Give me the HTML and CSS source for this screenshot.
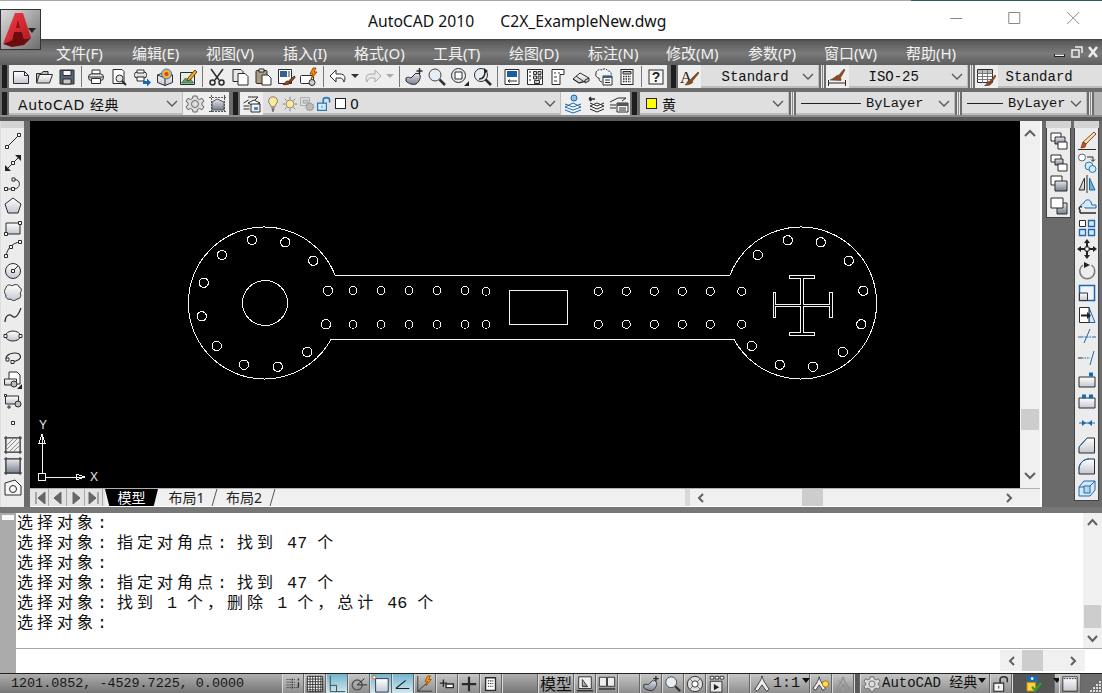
FILE: index.html
```html
<!DOCTYPE html>
<html lang="zh-CN">
<head>
<meta charset="utf-8">
<title>AutoCAD 2010</title>
<link rel="stylesheet" href="styles.css">
</head>
<body>
<svg class="defs" width="0" height="0">
<defs>
<linearGradient id="g" x1="0" y1="0" x2="0" y2="1"><stop offset="0" stop-color="#fff"/><stop offset="1" stop-color="#c2c7d0"/></linearGradient>
<linearGradient id="d" x1="0" y1="0" x2="0" y2="1"><stop offset="0" stop-color="#e8e8ee"/><stop offset="1" stop-color="#77808e"/></linearGradient>
<linearGradient id="red" x1="0" y1="0" x2="1" y2="1"><stop offset="0" stop-color="#f0404a"/><stop offset="1" stop-color="#b5141b"/></linearGradient>

<symbol id="chev" viewBox="0 0 12 8"><path fill="none" stroke="#555" stroke-width="1.300" d="M1 1l5 5 5-5"/></symbol>
<symbol id="new" viewBox="0 0 20 20"><path fill="url(#g)" d="M2.500 4.500h11l4 4v8h-15z"/><path d="M13.500 4.500v4h4"/></symbol>
<symbol id="open" viewBox="0 0 20 20"><path fill="#bbb" d="M2.500 16V6.500h5l1.500-2h5v3"/><path fill="url(#g)" d="M2.500 16l3-8.500h13l-3 8.500z"/></symbol>
<symbol id="save" viewBox="0 0 20 20"><path fill="#56647a" d="M3 3h14v14H3z"/><path fill="#f4f4f4" d="M6 3.500h8v5H6z"/><path fill="#c8c8c8" d="M6 12h8v5H6z"/></symbol>
<symbol id="print" viewBox="0 0 20 20"><path fill="#fff" d="M6 3h8v4H6z"/><rect fill="url(#g)" x="2.500" y="7" width="15" height="6.500" rx="3"/><path fill="#fff" d="M5.500 11.500h9v5h-9z"/><path d="M3 10h14"/></symbol>
<symbol id="preview" viewBox="0 0 20 20"><path fill="#fff" d="M4 2.500h9l2 2v12H4z"/><circle cx="10.500" cy="11.500" r="3.500" fill="#dfe6ee"/><path stroke-width="2" d="M13 14l4 4"/></symbol>
<symbol id="publish" viewBox="0 0 20 20"><rect fill="url(#g)" x="2.500" y="5" width="12" height="6" rx="2.500"/><path fill="#fff" d="M5 3h7v3H5zM5 10h7v4H5z"/><path fill="#1667b5" stroke="none" d="M11 14h4v-2.500l4 4-4 4V17h-4z"/></symbol>
<symbol id="plot3d" viewBox="0 0 20 20"><path fill="url(#g)" d="M2.500 8L10 5l7.500 3v7.500L10 18.500l-7.500-3z"/><path d="M2.500 8l7.500 3 7.500-3M10 11v7.500"/><circle cx="11.500" cy="7" r="5" fill="#f0b040" stroke="#2a80c0"/><circle cx="11.500" cy="7" r="2" fill="#d84030" stroke="none"/></symbol>
<symbol id="pen" viewBox="0 0 20 20"><path fill="#e8eee6" d="M2.500 5.500h14v12h-14z"/><path fill="#5aa070" stroke="#3b7a55" d="M3.500 16l4-5 3 3 2-2 3 4z"/><path fill="#e9b020" stroke="#704010" d="M10 11l7-8 2 2-7 8-3 1z"/></symbol>
<symbol id="cut" viewBox="0 0 20 20"><path stroke-width="1.500" d="M4 2l8 11M16 2l-8 11"/><circle cx="5.500" cy="15.500" r="2.500" stroke-width="1.500"/><circle cx="14.500" cy="15.500" r="2.500" stroke-width="1.500"/></symbol>
<symbol id="copy" viewBox="0 0 20 20"><path fill="#e8e8e8" d="M3 2.500h8l2 2v10H3z"/><path fill="#fff" d="M8 6.500h7l3 3v8.500H8z"/></symbol>
<symbol id="paste" viewBox="0 0 20 20"><rect x="3" y="3.500" width="11" height="13" rx="1" fill="#a99a80"/><path fill="#ddd" d="M6 2h5v3H6z"/><path fill="#fff" d="M9 8h6l3 3v7H9z"/></symbol>
<symbol id="match" viewBox="0 0 20 20"><path fill="#fff" d="M2.500 2.500h13v14h-13z"/><path fill="#36608f" stroke="none" d="M4 4h7v6H4z"/><path fill="#999" stroke="none" d="M12 4h2v6h-2z"/><path fill="#8a4a20" stroke="#5a2e10" d="M18.500 9l-6 5 1.500 2 5-5.500zM12 14c-2 0-3 2-5 3.500 3 .5 6 0 7-1.500z"/></symbol>
<symbol id="block" viewBox="0 0 20 20"><rect x="1.500" y="8.500" width="13" height="8" rx="1" fill="#fff"/><circle cx="13" cy="15.500" r="3" fill="#ccc"/><path fill="#f09010" stroke="#a05000" d="M14 1l-3 6h3l-2 5 6-7h-3l2-4z"/></symbol>
<symbol id="undo" viewBox="0 0 20 20"><path fill="#fff" d="M8 3L2 9l6 6v-4h4c2 0 3 1 4 4 2-4 1-8-4-8H8z"/></symbol>
<symbol id="redo" viewBox="0 0 20 20"><path fill="#e8e8e8" stroke="#aaa" d="M12 3l6 6-6 6v-4H8c-2 0-3 1-4 4-2-4-1-8 4-8h4z"/></symbol>
<symbol id="pan" viewBox="0 0 20 20"><path fill="url(#d)" d="M2 11c2-1 3-1 5 0l5-5 1 1 1-1 2 2c1 3-1 7-4 9-3 1-7 0-10-3z"/><path stroke-width="1.500" d="M15.500 1v6M12.500 4h6"/></symbol>
<symbol id="zoom" viewBox="0 0 20 20"><circle cx="8" cy="8" r="6" fill="#e6eef4" stroke="#444"/><path stroke-width="2.500" stroke="#333" d="M12.500 12.500l5.500 5.500"/></symbol>
<symbol id="zoomw" viewBox="0 0 20 20"><circle cx="8.500" cy="8.500" r="7" fill="#e6eef4"/><path fill="#fff" d="M5 5h7v7H5z"/><path fill="#222" stroke="none" d="M19 14v5h-5z"/></symbol>
<symbol id="zoomp" viewBox="0 0 20 20"><circle cx="8" cy="8" r="6.500" fill="#e6eef4"/><path stroke-width="2.500" d="M12.500 12.500l5.500 5.500"/><path fill="#222" stroke="none" d="M11 1l4 3-4 3z"/><path stroke-width="1.500" d="M6 12c4 0 6-3 6-8"/></symbol>
<symbol id="props" viewBox="0 0 20 20"><path fill="#fff" d="M3 2.500h14v15H3z"/><path fill="#1c5ca3" stroke="none" d="M5 4h10v6H5z"/><path d="M6 14h9M6 14l2-1.500M6 14l2 1.500"/></symbol>
<symbol id="dc" viewBox="0 0 20 20"><path fill="#fff" d="M2.500 2.500h15v15h-15z"/><path fill="#888" stroke="none" d="M4 4h2v2H4zM4 8h2v2H4zM4 12h2v2H4z"/><path fill="#cfcfcf" stroke="#333" d="M8.500 4.500h3v3h-3zM13 4.500h3v3h-3zM8.500 9h3v3h-3zM13 9h3v3h-3zM9.500 13.500h5v3h-5z"/></symbol>
<symbol id="tp" viewBox="0 0 20 20"><path fill="#fff" d="M4 2.500h12v5h-4v10H4z"/><path fill="#999" stroke="none" d="M6 5h2v2H6zM10 5h2v2h-2zM6 9h3v2H6zM6 13h3v2H6z"/></symbol>
<symbol id="sheet" viewBox="0 0 20 20"><path fill="url(#g)" d="M2 12l7-6 9 5-3 3-7 2z"/><path d="M5 9l7 5M2 12l6 4 7-2"/><path fill="#ccc" d="M14 13l4-2v3l-4 2z"/></symbol>
<symbol id="markup" viewBox="0 0 20 20"><path fill="#f4f4f4" stroke-dasharray="2 1" d="M2 6c0-3 4-4 6-3 2-2 5-1 6 1 2 0 4 2 3 4"/><path d="M2 6c-1 3 1 5 3 5 0 2 1 4 3 4"/><path fill="#fff" d="M9 9h9v9H9z"/><path fill="#36608f" stroke="none" d="M9 9h9v2H9z"/><path d="M11 13h5M11 15.500h5"/></symbol>
<symbol id="calc" viewBox="0 0 20 20"><rect x="4" y="2.500" width="12" height="15" fill="#fff"/><path fill="#bbb" d="M6 4.500h8v2.500H6z"/><path stroke-width="1.500" stroke-dasharray="1.500 1" d="M6 9.500h8M6 12h8M6 14.500h8"/></symbol>
<symbol id="help" viewBox="0 0 20 20"><rect x="3" y="3" width="14" height="14" fill="#f8f8f8"/><text x="10" y="15" class="gt">?</text></symbol>
<symbol id="astyle" viewBox="0 0 20 20"><text x="1" y="16" class="ga">A</text><path fill="#8a4a20" stroke="#5a2e10" stroke-width=".5" d="M19 5l-7 7 1.500 2 6.500-8zM11 12c-2 1-2 3-5 6 3 0 7-1 8-3z"/></symbol>
<symbol id="dimstyle" viewBox="0 0 20 20"><path fill="#8a4a20" stroke="#5a2e10" stroke-width=".5" d="M17 2l-5 6 2 2 4-7zM11 8c-2 1-5 4-8 5l11 .500c0-2 0-4-3-5.500z"/><path d="M1.500 13v6M18.500 13v6M1.500 16h17"/></symbol>
<symbol id="tablestyle" viewBox="0 0 20 20"><path fill="#fff" d="M1.500 2.500h15v13h-15z"/><path fill="#bbb" stroke="none" d="M2 3h14v3H2z"/><path stroke="#777" d="M1.500 6.500h15M1.500 9.500h15M1.500 12.500h15M6.500 3v13M11.500 3v13"/><path fill="#8a4a20" stroke="#5a2e10" stroke-width=".5" d="M19 8l-5 6 1.500 2 4.500-7zM13.500 14c-2 0-2 3-5 4.500 3 .5 6 0 7-2z"/></symbol>
<symbol id="gear" viewBox="0 0 20 20"><path fill="#ddd" stroke="#666" d="M8 2h4l.5 2.500 2.200 1 2.300-1.300 2 3-2 1.600v2.400l2 1.600-2 3-2.300-1.300-2.200 1L12 18H8l-.5-2.500-2.200-1L3 15.800l-2-3 2-1.600V8.800L1 7.200l2-3 2.300 1.300 2.200-1z"/><circle cx="10" cy="10" r="3.500" stroke="#666"/></symbol>
<symbol id="work" viewBox="0 0 20 20"><path stroke="#555" stroke-dasharray="2 1" d="M1 3.500h18M1 17.500h18M3.500 1v18M16.500 1v18"/><path fill="url(#d)" stroke="#555" d="M4 16V8l5-3 7 3v8z"/></symbol>
<symbol id="layer" viewBox="0 0 20 20"><path fill="#fff" d="M6 9l6-3 6 3-6 3z"/><path d="M1.500 9l5-3M1.500 12h6M1.500 15h6M6 3h10l-3 3"/><path fill="#f0f0f0" d="M9 10h9v8H9z"/><path fill="#4b87bd" stroke="none" d="M12 13h4v3h-4z"/></symbol>
<symbol id="bulb" viewBox="0 0 20 20"><path fill="#ffe89a" stroke="#666" d="M10 1c-3.500 0-5.500 2.500-5.500 5.500 0 3 3 4 3 7h5c0-3 3-4 3-7C15.500 3.500 13.500 1 10 1z"/><path stroke="#555" stroke-width="1.500" d="M8 15h4M8.500 17h3M9 19h2"/></symbol>
<symbol id="sun" viewBox="0 0 20 20"><circle cx="10" cy="10" r="5" fill="#ffe89a" stroke="#777"/><path stroke="#666" d="M10 1v3M10 16v3M1 10h3M16 10h3M3.500 3.500l2 2M14.500 14.500l2 2M16.500 3.500l-2 2M5.500 14.500l-2 2"/></symbol>
<symbol id="freeze" viewBox="0 0 20 20"><path fill="#e4e4e4" stroke="#999" d="M2 2h11v10H2z"/><path fill="#ccc" stroke="#999" d="M5 5h6v4H5z"/><circle cx="13.500" cy="13.500" r="4.500" fill="#bbb" stroke="#999" stroke-dasharray="2 1" stroke-width="2"/></symbol>
<symbol id="lockb" viewBox="0 0 20 20"><path fill="#d7ecf8" stroke="#2b78b5" stroke-width="1.500" d="M2 9h11v9H2z"/><path stroke="#2b78b5" stroke-width="2" d="M9 9V5c0-4 8-4 8 0v3"/><path stroke="#2b78b5" d="M7.500 12v3"/></symbol>
<symbol id="layprev" viewBox="0 0 20 20"><path fill="#fff" stroke="#1c68ae" d="M2 13l8-4 8 4-8 3z"/><path stroke="#1c68ae" d="M2 16l8 3 8-3M2 10l8 3 8-3"/><circle cx="11" cy="4" r="3" fill="#8fc0e6" stroke="#1c68ae"/></symbol>
<symbol id="laymatch" viewBox="0 0 20 20"><path fill="#fff" d="M4 12l7-3 7 3-7 3z"/><path d="M4 15l7 3 7-3M4 9l7 3 7-3"/><path stroke-width="1.500" d="M9 5H3M3 5l2-2M3 5l2 2M5 5v2"/></symbol>
<symbol id="laysave" viewBox="0 0 20 20"><path d="M1 8l8-4h8l-4 3M1 11h6M1 14h6"/><path fill="#f4f4f4" d="M8 9h11v9H8z"/><path fill="#555" stroke="none" d="M8 9h11v3H8z"/><path d="M10 14h7M10 16h7"/></symbol>

<symbol id="t-line" viewBox="0 0 20 20"><path d="M4 16L16 4"/><path fill="#fff" d="M2.500 14.500h3v3h-3zM14.500 2.500h3v3h-3z"/></symbol>
<symbol id="t-xline" viewBox="0 0 20 20"><path d="M3 17L17 3"/><path fill="#fff" d="M8.500 8.500h3v3h-3z"/><path fill="#222" stroke="none" d="M18 2v6l-6-6zM2 18v-6l6 6z"/></symbol>
<symbol id="t-pline" viewBox="0 0 20 20"><path d="M3 15h7c6 0 7-4 6-7-1-2-3-2.500-5-2.500"/><path fill="#fff" d="M1.500 13.500h3v3h-3zM8.500 13.500h3v3h-3zM9 4h3v3H9z"/></symbol>
<symbol id="t-poly" viewBox="0 0 20 20"><path fill="url(#g)" d="M10 2l8 6-3 9H5L2 8z"/></symbol>
<symbol id="t-rect" viewBox="0 0 20 20"><path fill="url(#g)" d="M3 5h14v11H3z"/><path fill="#fff" d="M1.500 14.500h3v3h-3zM15.500 3.500h3v3h-3z"/></symbol>
<symbol id="t-arc" viewBox="0 0 20 20"><path d="M3 17C4 10 9 4 17 3"/><path fill="#fff" d="M1.500 15.500h3v3h-3zM15.500 1.500h3v3h-3zM6.500 6.500h3v3h-3z"/></symbol>
<symbol id="t-circle" viewBox="0 0 20 20"><circle cx="10" cy="10" r="7.500" fill="url(#g)"/><path d="M10 10l5-5"/><path fill="#fff" d="M8.500 8.500h3v3h-3z"/></symbol>
<symbol id="t-cloud" viewBox="0 0 20 20"><path fill="url(#g)" d="M3 5c0-3 4-4 6-2 2-2 7-2 7 1 3 1 3 4 1 6 2 3 0 6-3 6-2 2-5 2-6 0-3 1-6-1-5-4-2-2-2-5 0-7z"/></symbol>
<symbol id="t-spline" viewBox="0 0 20 20"><path stroke-width="1.200" d="M2 17c0-6 4-9 7-6s6 0 9-8"/></symbol>
<symbol id="t-ellipse" viewBox="0 0 20 20"><ellipse cx="10" cy="10" rx="7.500" ry="5" fill="url(#g)"/><path fill="#fff" d="M1 8.500h3v3H1zM16 8.500h3v3h-3z"/></symbol>
<symbol id="t-earc" viewBox="0 0 20 20"><path stroke-width="1.200" d="M5 13C0 9 6 5 12 5c6 0 7 5 3 7-2 1-4 2-6 2"/><path fill="#fff" d="M3 10h3v3H3zM8 12.500h3v3H8z"/></symbol>
<symbol id="t-insert" viewBox="0 0 20 20"><path fill="#fff" d="M6 2h8l3 3v9H6z"/><path fill="url(#g)" d="M1.500 9h12v6h-12z"/><circle cx="11" cy="14" r="3" fill="#bbb"/><path fill="#222" stroke="none" d="M19 14v5h-5z"/></symbol>
<symbol id="t-block" viewBox="0 0 20 20"><path fill="url(#g)" d="M2.500 5h13v8h-13z"/><circle cx="15" cy="13" r="3" fill="#bbb"/><path fill="#fff" d="M1.500 3.500h2v2h-2zM5 15h2v2H5z"/></symbol>
<symbol id="t-point" viewBox="0 0 20 20"><path fill="#fff" d="M8.500 8.500h3v3h-3z"/></symbol>
<symbol id="t-hatch" viewBox="0 0 20 20"><path d="M3 1v18M17 1v18M1 3h18M1 17h18"/><path fill="#eee" d="M3 3h14v14H3z"/><path stroke="#888" d="M4 10l6-6M4 14l10-10M7 16l9-9M11 16l5-5"/></symbol>
<symbol id="t-grad" viewBox="0 0 20 20"><path d="M3 1v18M17 1v18M1 3h18M1 17h18"/><path fill="url(#d)" d="M3 3h14v14H3z"/></symbol>
<symbol id="t-region" viewBox="0 0 20 20"><path fill="#f6f6f6" d="M2 5l10-3 6 6v9H2z"/><circle cx="10" cy="11" r="3.500"/></symbol>

<symbol id="o-a" viewBox="0 0 20 20"><path fill="#fff" d="M2 2h10v8H2z"/><path fill="url(#d)" d="M6 6h10v7H6z"/><path fill="#fff" d="M9 11h9v7H9z"/></symbol>
<symbol id="o-b" viewBox="0 0 20 20"><path fill="#fff" d="M2 2h10v7H2z"/><path fill="url(#d)" d="M6 6h8v6H6z"/><path fill="#fff" d="M9 11h9v7H9z"/></symbol>
<symbol id="o-c" viewBox="0 0 20 20"><path fill="#fff" d="M2 2h11v9H2z"/><path fill="url(#d)" d="M6 7h12v10H6z"/></symbol>
<symbol id="o-d" viewBox="0 0 20 20"><path fill="url(#d)" d="M8 7h10v11H8z"/><path fill="#fff" d="M2 2h12v10H2z"/></symbol>
<symbol id="m-erase" viewBox="0 0 20 20"><path fill="#f0e0a0" stroke="#844" d="M17 1l2 2L9 13l-3-2z"/><path fill="#d94a20" stroke="#842" d="M6 11l3 2-1 3-4 1z"/><path d="M1 18.500h18"/></symbol>
<symbol id="m-copy" viewBox="0 0 20 20"><circle cx="5" cy="4.500" r="3.500" fill="#fff" stroke="#666"/><circle cx="12" cy="13" r="4" fill="#d6e8f6" stroke="#2b78b5"/><circle cx="15.500" cy="16" r="3.500" fill="#d6e8f6" stroke="#2b78b5"/><path d="M10 4h6v4M14 6.500l2 2 2-2"/></symbol>
<symbol id="m-mirror" viewBox="0 0 20 20"><path d="M10 1v18"/><path fill="url(#g)" d="M7.500 4v12H2z"/><path fill="#6fb1de" stroke="#1c68ae" d="M12.500 4v12H18z"/></symbol>
<symbol id="m-offset" viewBox="0 0 20 20"><path fill="#d6e8f6" stroke="#1c68ae" d="M4 11c-1-3 2-3 3-4 1-4 6-4 7-1l1 3h4v3H8v-1"/><path fill="#fff" stroke-width="1.500" d="M3 17v-3c-2-2 0-4 2-3M3 17h16"/></symbol>
<symbol id="m-array" viewBox="0 0 20 20"><path fill="#fff" d="M2.500 2.500h6v6h-6z"/><path fill="#d6e8f6" stroke="#1c68ae" stroke-width="1.300" d="M11.500 2.500h6v6h-6zM2.500 11.500h6v6h-6zM11.500 11.500h6v6h-6z"/></symbol>
<symbol id="m-move" viewBox="0 0 20 20"><path fill="#fff" d="M8 8h4v4H8z"/><path fill="#222" stroke="none" d="M10 0l3 4H7zM10 20l-3-4h6zM0 10l4-3v6zM20 10l-4 3V7z"/><path fill="#222" stroke="none" d="M9 4h2v4H9zM9 12h2v4H9zM4 9h4v2H4zM12 9h4v2h-4z"/></symbol>
<symbol id="m-rotate" viewBox="0 0 20 20"><path stroke="#777" stroke-width="1.500" d="M6 4a7.500 7.500 0 1 0 8.500 0"/><path fill="#222" stroke="none" d="M7 1l6 3-6 3z"/></symbol>
<symbol id="m-scale" viewBox="0 0 20 20"><path fill="#eef4fa" stroke="#1c68ae" stroke-width="1.500" d="M2.500 2.500h15v15h-15z"/><path fill="url(#g)" stroke="#333" d="M2.500 10h8v7.500h-8z"/></symbol>
<symbol id="m-stretch" viewBox="0 0 20 20"><path fill="#d6e8f6" stroke="#1c68ae" d="M12 2.500l6 15h-6z"/><path fill="#fff" d="M2.500 2.500H12v15H2.500z"/><path fill="#222" stroke="none" d="M4 9.500h6V7l4 3.500-4 3.500v-2.500H4z"/></symbol>
<symbol id="m-trim" viewBox="0 0 20 20"><path stroke="#1c68ae" d="M1 11h4M15 11h4M7 17l6-14"/><path stroke="#1c68ae" stroke-dasharray="1.500 1" d="M5 11h10"/></symbol>
<symbol id="m-extend" viewBox="0 0 20 20"><path d="M1 10h4"/><path stroke="#1c68ae" stroke-dasharray="1.500 1" d="M5 10h8"/><path stroke="#1c68ae" d="M13 17l4-14"/></symbol>
<symbol id="m-break1" viewBox="0 0 20 20"><path fill="url(#g)" d="M2 7h16v10H2z"/><path fill="#1c68ae" stroke="none" d="M12 2.500h4v4h-4z"/></symbol>
<symbol id="m-break2" viewBox="0 0 20 20"><path fill="url(#g)" d="M2 7h16v10H2z"/><path fill="#1c68ae" stroke="none" d="M5 3.500h4v4H5zM12 3.500h4v4h-4z"/></symbol>
<symbol id="m-join" viewBox="0 0 20 20"><path stroke="#1c68ae" d="M2 10h16"/><path fill="#1c68ae" stroke="none" d="M5 7l4 3-4 3zM15 7l-4 3 4 3z"/></symbol>
<symbol id="m-chamfer" viewBox="0 0 20 20"><path fill="url(#g)" d="M2 18v-6l8-9h7.500v15z"/><path stroke="#1c68ae" d="M2 12l8-9"/></symbol>
<symbol id="m-fillet" viewBox="0 0 20 20"><path fill="url(#g)" d="M2 18v-5c0-6 5-10 10-10h5.500v15z"/><path stroke="#1c68ae" d="M2 13c0-6 5-10 10-10"/></symbol>
<symbol id="m-explode" viewBox="0 0 20 20"><path stroke="#1c68ae" fill="#d6e8f6" d="M2 9l5-6h11v9l-5 6H2z"/><path stroke="#1c68ae" fill="#b8d6ee" d="M7 8h6v7H7z"/><path stroke="#1c68ae" d="M13 8l5-5M2 9h5"/></symbol>

<symbol id="s-snap" viewBox="0 0 20 20"><path stroke="#222" stroke-dasharray="1 1" d="M3 5h10M3 8h10M3 11h10M3 14h14M9 4v11"/><path stroke-width="1.500" d="M16 4v2M16 8v6"/></symbol>
<symbol id="s-grid" viewBox="0 0 20 20"><path fill="#fff" d="M1.500 1.500h17v17h-17z"/><path d="M4.500 1v18M7.500 1v18M10.500 1v18M13.500 1v18M16.500 1v18M1 4.500h18M1 7.500h18M1 10.500h18M1 13.500h18M1 16.500h18"/></symbol>
<symbol id="s-ortho" viewBox="0 0 20 20"><path stroke="#245" d="M2.500 1v17.500H19M2.500 11.500h7v7"/></symbol>
<symbol id="s-polar" viewBox="0 0 20 20"><circle cx="8" cy="11" r="5.500" stroke="#555" stroke-width="1.500"/><path stroke="#222" d="M8 11h11M8 11l8-7"/></symbol>
<symbol id="s-osnap" viewBox="0 0 20 20"><path fill="url(#g)" stroke="#234" d="M4 4h14v15H4z"/><circle cx="2.500" cy="2.500" r="1.800" fill="#fff" stroke="#e06010"/></symbol>
<symbol id="s-otrack" viewBox="0 0 20 20"><path stroke="#123" stroke-width="1.200" d="M2 15h15M2 15l11-9"/></symbol>
<symbol id="s-ducs" viewBox="0 0 20 20"><path stroke="#333" d="M2 1v17h16M2 18L13 8"/><path fill="#f8a010" stroke="#a05000" d="M13 1l-3 6h3l-2 5 6-7h-3l2-4z"/></symbol>
<symbol id="s-dyn" viewBox="0 0 20 20"><path stroke-width="1.500" d="M2 9h8M6 5v8"/><path fill="#fff" stroke-width="1.500" d="M9 10h8v4H9z"/></symbol>
<symbol id="s-lw" viewBox="0 0 20 20"><path stroke-width="2.500" d="M2 10h16M10 2v16"/></symbol>
<symbol id="s-qp" viewBox="0 0 20 20"><path fill="#fff" stroke-width="1.500" d="M4 3h11v14H4z"/><path stroke-dasharray="1.500 1" stroke-width="1.200" d="M6.500 6.500h6M6.500 9.500h6M6.500 12.500h6"/></symbol>
<symbol id="s-model" viewBox="0 0 20 20"><path fill="#eee" d="M3 2h14v13H3z"/><path fill="url(#d)" d="M7 5l6 8H7z"/><path stroke-width="1.500" d="M1 17.500h18"/></symbol>
<symbol id="s-layouts" viewBox="0 0 20 20"><path fill="#eee" d="M1.500 2.500h8v10h-8zM10.500 2.500h8v10h-8z"/><path stroke-width="1.500" d="M1 15.500h18"/></symbol>
<symbol id="s-wheel" viewBox="0 0 20 20"><circle cx="10" cy="10" r="8.500" fill="#ddd"/><circle cx="10" cy="10" r="3.500" fill="#fff"/><path stroke="#666" d="M4 4l4 4M16 4l-4 4M4 16l4-4M16 16l-4-4"/></symbol>
<symbol id="s-motion" viewBox="0 0 20 20"><path fill="#fff" d="M2.500 1.500h4v3h-4zM8 1.500h4v3H8zM13.500 1.500h4v3h-4z"/><path fill="#e8e8e8" d="M2.500 7h13v12h-13z"/><path fill="#222" stroke="none" d="M6.500 10l6 3.500-6 3.500z"/></symbol>
<symbol id="s-anno" viewBox="0 0 20 20"><path fill="#eee" stroke="#333" d="M10 1c1 4 2 6 8 15l-3 2-5-7-5 7-3-2c6-9 7-11 8-15z"/></symbol>
<symbol id="s-annob" viewBox="0 0 20 20"><path fill="#eee" stroke="#333" d="M8 2c1 4 2 6 7 13l-3 2-4-6-4 6-3-2C6 8 7 6 8 2z"/><circle cx="15" cy="10" r="3.500" fill="#ffd860" stroke="#a07000"/></symbol>
<symbol id="s-annoc" viewBox="0 0 20 20"><path fill="none" stroke="#8f8f8f" stroke-width="1.500" d="M10 2c1 4 2 6 7 13l-3 2-4-6-4 6-3-2c5-7 6-9 7-13z"/><path stroke="#8f8f8f" d="M4 6l12 8"/></symbol>
<symbol id="s-lock" viewBox="0 0 20 20"><path fill="#f2f2f2" stroke-width="1.200" d="M2 9h11v9H2z"/><path stroke-width="1.700" d="M9 9V5c0-4 8-4 8 0v3"/><path d="M7.500 12v3"/></symbol>
<symbol id="s-tray" viewBox="0 0 20 20"><path fill="#1c6aad" stroke="none" d="M2 1h12v9H2z"/><path fill="#ffd040" stroke="#a07000" d="M2 8h10v10H2z"/><circle cx="8" cy="4" r="1.500" fill="#fff" stroke="none"/><path stroke="#2ea02e" stroke-width="2.500" d="M8 13l3 4 7-8"/></symbol>
<symbol id="s-win" viewBox="0 0 20 20"><path fill="url(#g)" d="M2 2h16v16H2z"/><path stroke-dasharray="2 1" d="M3 4h14"/></symbol>
</defs>
</svg>

<div class="topline"></div>
<header class="titlebar">
  <div class="logo">
    <svg viewBox="0 0 40 40" width="40" height="40"><path fill="url(#red)" d="M3 34L15 3h8l8 25-7 1-2-7H14l-2 8z"/><path fill="#6f0a0e" d="M3 34l9-4 2-8h8l2 7 7-1-7 7-12 2z"/><path fill="#8f1015" d="M16 18l2-8 2 8z"/></svg>
    <span class="logo-caret"></span>
  </div>
  <div class="title-text"><span class="t-app">AutoCAD 2010</span><span class="t-doc">C2X_ExampleNew.dwg</span></div>
  <div class="winctl">
    <svg class="wc" width="14" height="14" viewBox="0 0 14 14"><path d="M1 7.500h12"/></svg>
    <svg class="wc" width="14" height="14" viewBox="0 0 14 14"><path d="M1.500 1.500h11v11h-11z"/></svg>
    <svg class="wc" width="14" height="14" viewBox="0 0 14 14"><path d="M1 1l12 12M13 1L1 13"/></svg>
  </div>
</header>

<nav class="menubar">
  <span class="mi w1">文件(F)</span><span class="mi w2">编辑(E)</span><span class="mi w3">视图(V)</span><span class="mi w4">插入(I)</span><span class="mi w5">格式(O)</span><span class="mi w6">工具(T)</span><span class="mi w7">绘图(D)</span><span class="mi w8">标注(N)</span><span class="mi w9">修改(M)</span><span class="mi w10">参数(P)</span><span class="mi w11">窗口(W)</span><span class="mi w12">帮助(H)</span>
  <div class="mdi">
    <svg width="44" height="14" viewBox="0 0 44 14"><path fill="#222" d="M0 9h11v3H0z"/><path fill="#eee" d="M1 9.500h9v1.500H1z"/><path fill="none" stroke="#eee" stroke-width="1.500" d="M18 5h7v7h-7zM21 2h7v6"/><path stroke="#eee" stroke-width="2.500" d="M35 2l8 10M43 2l-8 10"/></svg>
  </div>
</nav>

<div class="tbrow r1">
  <span class="handle"></span>
  <div class="tb">
    <span class="b"><svg class="ic"><use href="#new"/></svg></span><span class="b"><svg class="ic"><use href="#open"/></svg></span><span class="b"><svg class="ic"><use href="#save"/></svg></span><i class="sep"></i>
    <span class="b"><svg class="ic"><use href="#print"/></svg></span><span class="b"><svg class="ic"><use href="#preview"/></svg></span><span class="b"><svg class="ic"><use href="#publish"/></svg></span><span class="b"><svg class="ic"><use href="#plot3d"/></svg></span><span class="b"><svg class="ic"><use href="#pen"/></svg></span><i class="sep"></i>
    <span class="b"><svg class="ic"><use href="#cut"/></svg></span><span class="b"><svg class="ic"><use href="#copy"/></svg></span><span class="b"><svg class="ic"><use href="#paste"/></svg></span><span class="b"><svg class="ic"><use href="#match"/></svg></span><span class="b"><svg class="ic"><use href="#block"/></svg></span><i class="sep"></i>
    <span class="b"><svg class="ic"><use href="#undo"/></svg></span><span class="dd"></span><span class="b"><svg class="ic"><use href="#redo"/></svg></span><span class="dd off"></span><i class="sep"></i>
    <span class="b"><svg class="ic"><use href="#pan"/></svg></span><span class="b"><svg class="ic"><use href="#zoom"/></svg></span><span class="b"><svg class="ic"><use href="#zoomw"/></svg></span><span class="b"><svg class="ic"><use href="#zoomp"/></svg></span><i class="sep"></i>
    <span class="b"><svg class="ic"><use href="#props"/></svg></span><span class="b"><svg class="ic"><use href="#dc"/></svg></span><span class="b"><svg class="ic"><use href="#tp"/></svg></span><span class="b"><svg class="ic"><use href="#sheet"/></svg></span><span class="b"><svg class="ic"><use href="#markup"/></svg></span><span class="b"><svg class="ic"><use href="#calc"/></svg></span><i class="sep"></i>
    <span class="b"><svg class="ic"><use href="#help"/></svg></span>
  </div>
  <span class="handle gap1"></span>
  <div class="tb">
    <span class="b"><svg class="ic"><use href="#astyle"/></svg></span>
    <span class="combo mono c-std"><span>Standard</span><svg class="chev"><use href="#chev"/></svg></span>
    <i class="dsep"></i>
    <span class="b"><svg class="ic"><use href="#dimstyle"/></svg></span>
    <span class="combo mono c-iso"><span>ISO-25</span><svg class="chev"><use href="#chev"/></svg></span>
    <i class="dsep"></i>
    <span class="b"><svg class="ic"><use href="#tablestyle"/></svg></span>
    <span class="combo mono c-tbl"><span>Standard</span></span>
  </div>
</div>

<div class="tbrow r2">
  <span class="handle"></span>
  <div class="tb">
    <span class="combo c-ws"><span>AutoCAD 经典</span><svg class="chev"><use href="#chev"/></svg></span>
    <span class="b"><svg class="ic"><use href="#gear"/></svg></span><span class="b"><svg class="ic"><use href="#work"/></svg></span>
  </div>
  <span class="handle gap2"></span>
  <div class="tb">
    <span class="b"><svg class="ic"><use href="#layer"/></svg></span>
    <span class="combo c-layer">
      <svg class="ic16"><use href="#bulb"/></svg><svg class="ic16"><use href="#sun"/></svg><svg class="ic16"><use href="#freeze"/></svg><svg class="ic16"><use href="#lockb"/></svg><i class="swatch white"></i><span class="lname">0</span><svg class="chev"><use href="#chev"/></svg>
    </span>
    <span class="b"><svg class="ic"><use href="#layprev"/></svg></span><span class="b"><svg class="ic"><use href="#laymatch"/></svg></span><span class="b"><svg class="ic"><use href="#laysave"/></svg></span>
  </div>
  <span class="handle gap3"></span>
  <div class="tb">
    <span class="combo c-color"><i class="swatch yellow"></i><span>黄</span><svg class="chev"><use href="#chev"/></svg></span>
    <i class="dsep"></i>
    <span class="combo mono c-ltype"><i class="lt lt1"></i><span>ByLayer</span><svg class="chev"><use href="#chev"/></svg></span>
    <i class="dsep"></i>
    <span class="combo mono c-lw"><i class="lt lt2"></i><span>ByLayer</span><svg class="chev"><use href="#chev"/></svg></span>
    <i class="dsep"></i>
    <span class="rest"></span>
  </div>
</div>

<main class="main">
  <aside class="vtb left">
    <span class="vhandle"></span>
    <div class="vbody">
      <svg class="ic"><use href="#t-line"/></svg><svg class="ic"><use href="#t-xline"/></svg><svg class="ic"><use href="#t-pline"/></svg><svg class="ic"><use href="#t-poly"/></svg><svg class="ic"><use href="#t-rect"/></svg><svg class="ic"><use href="#t-arc"/></svg><svg class="ic"><use href="#t-circle"/></svg><svg class="ic"><use href="#t-cloud"/></svg><svg class="ic"><use href="#t-spline"/></svg><svg class="ic"><use href="#t-ellipse"/></svg><svg class="ic"><use href="#t-earc"/></svg><svg class="ic"><use href="#t-insert"/></svg><svg class="ic"><use href="#t-block"/></svg><svg class="ic"><use href="#t-point"/></svg><svg class="ic"><use href="#t-hatch"/></svg><svg class="ic"><use href="#t-grad"/></svg><svg class="ic"><use href="#t-region"/></svg>
    </div>
  </aside>

  <section class="doc">
    <div class="docrow">
      <svg class="canvas" viewBox="30 121 990 367" width="990" height="367">
        <g class="cad">
          <path d="M335 275H730A76 76 0 1 1 734 339.500H331A76 76 0 1 1 335 275Z"/>
          <circle cx="265" cy="303" r="22.500"/>
          <rect x="509" y="290.500" width="58" height="34"/>
          <g class="holes">
            <circle cx="252" cy="240" r="4.700"/><circle cx="285.300" cy="242.300" r="4.700"/><circle cx="222" cy="255" r="4.700"/><circle cx="313.300" cy="260.700" r="4.700"/><circle cx="203.700" cy="282.700" r="4.700"/><circle cx="201.700" cy="316.300" r="4.700"/><circle cx="216.700" cy="346" r="4.700"/><circle cx="244" cy="364.700" r="4.700"/><circle cx="277.700" cy="366.700" r="4.700"/><circle cx="307.300" cy="352" r="4.700"/>
            <circle cx="328" cy="290.700" r="4.700"/><circle cx="353" cy="290.700" r="4"/><circle cx="381" cy="290.700" r="4"/><circle cx="409" cy="290.700" r="4"/><circle cx="437" cy="290.700" r="4"/><circle cx="465" cy="290.700" r="4"/><circle cx="486" cy="291.300" r="4"/>
            <circle cx="326" cy="324.300" r="4.700"/><circle cx="353" cy="324.300" r="4"/><circle cx="381" cy="324.300" r="4"/><circle cx="409" cy="324.300" r="4"/><circle cx="437" cy="324.300" r="4"/><circle cx="465" cy="324.300" r="4"/><circle cx="486" cy="324.300" r="4"/>
            <circle cx="598.300" cy="291.300" r="4"/><circle cx="626.300" cy="291.300" r="4"/><circle cx="654.300" cy="291.300" r="4"/><circle cx="682.300" cy="291.300" r="4"/><circle cx="710.300" cy="291.300" r="4"/><circle cx="741.700" cy="291.300" r="4"/>
            <circle cx="598.300" cy="324.300" r="4"/><circle cx="626.300" cy="324.300" r="4"/><circle cx="654.300" cy="324.300" r="4"/><circle cx="682.300" cy="324.300" r="4"/><circle cx="710.300" cy="324.300" r="4"/><circle cx="741.700" cy="324.300" r="4"/>
            <circle cx="787.700" cy="240.300" r="4.700"/><circle cx="820.700" cy="242.300" r="4.700"/><circle cx="757.700" cy="255" r="4.700"/><circle cx="848.700" cy="260.700" r="4.700"/><circle cx="863.300" cy="290.700" r="4.700"/><circle cx="861.300" cy="324.300" r="4.700"/><circle cx="751.700" cy="346" r="4.700"/><circle cx="842.700" cy="352" r="4.700"/><circle cx="779.700" cy="364.700" r="4.700"/><circle cx="813" cy="366.700" r="4.700"/>
          </g>
          <path d="M789.500 275.500h25v3h-11v26h26v-12h2.500v25h-2.500v-11h-26v26h11v3h-25v-3h11v-26h-25v11h-2.500v-25h2.500v12h25v-26h-11z"/>
          <rect x="38.500" y="473.500" width="7" height="7"/>
          <path d="M42 473V434M46 477H85M39 443l3-9 3 9zM76 474l9 3-9 3z"/>
        </g>
        <text x="43" y="429" class="ucs">Y</text>
        <text x="94" y="481" class="ucs">X</text>
      </svg>
      <div class="vscroll">
        <svg class="arrow" width="20" height="24" viewBox="0 0 20 24"><path d="M5 15l5-5 5 5"/></svg>
        <span class="vthumb"></span>
        <svg class="arrow" width="20" height="24" viewBox="0 0 20 24"><path d="M5 9l5 5 5-5"/></svg>
      </div>
    </div>
    <div class="tabrow">
      <div class="navbtns">
        <span class="nb"><svg width="12" height="14" viewBox="0 0 12 14"><path d="M2 1v12M11 1v12L4 7z"/></svg></span>
        <span class="nb"><svg width="12" height="14" viewBox="0 0 12 14"><path d="M9 1v12L2 7z"/></svg></span>
        <span class="nb"><svg width="12" height="14" viewBox="0 0 12 14"><path d="M3 1v12l7-6z"/></svg></span>
        <span class="nb"><svg width="12" height="14" viewBox="0 0 12 14"><path d="M1 1v12l7-6zM10 1v12"/></svg></span>
      </div>
      <span class="tab active">模型</span><span class="tab t1">布局1</span><span class="tab t2">布局2</span>
      <div class="hscroll">
        <svg class="arrow" width="14" height="14" viewBox="0 0 14 14"><path d="M9 3L5 7l4 4"/></svg>
        <span class="hthumb"></span>
        <svg class="arrow" width="14" height="14" viewBox="0 0 14 14"><path d="M5 3l4 4-4 4"/></svg>
      </div>
    </div>
  </section>

  <aside class="vtb order">
    <span class="vhandle"></span>
    <div class="vbody">
      <svg class="ic"><use href="#o-a"/></svg><svg class="ic"><use href="#o-b"/></svg><svg class="ic"><use href="#o-c"/></svg><svg class="ic"><use href="#o-d"/></svg>
    </div>
  </aside>
  <aside class="vtb modify">
    <span class="vhandle"></span>
    <div class="vbody">
      <svg class="ic"><use href="#m-erase"/></svg><svg class="ic"><use href="#m-copy"/></svg><svg class="ic"><use href="#m-mirror"/></svg><svg class="ic"><use href="#m-offset"/></svg><svg class="ic"><use href="#m-array"/></svg><svg class="ic"><use href="#m-move"/></svg><svg class="ic"><use href="#m-rotate"/></svg><svg class="ic"><use href="#m-scale"/></svg><svg class="ic"><use href="#m-stretch"/></svg><svg class="ic"><use href="#m-trim"/></svg><svg class="ic"><use href="#m-extend"/></svg><svg class="ic"><use href="#m-break1"/></svg><svg class="ic"><use href="#m-break2"/></svg><svg class="ic"><use href="#m-join"/></svg><svg class="ic"><use href="#m-chamfer"/></svg><svg class="ic"><use href="#m-fillet"/></svg><svg class="ic"><use href="#m-explode"/></svg>
    </div>
  </aside>
</main>

<section class="cmd">
  <div class="cmdhandle"><span class="cmddots"></span></div>
  <div class="cmdmain">
    <div class="cmdtop">
      <div class="history">
        <div class="ln"><b>选择对象</b>:</div>
        <div class="ln"><b>选择对象</b>: <b>指定对角点</b>: <b>找到</b> 47 <b>个</b></div>
        <div class="ln"><b>选择对象</b>:</div>
        <div class="ln"><b>选择对象</b>: <b>指定对角点</b>: <b>找到</b> 47 <b>个</b></div>
        <div class="ln"><b>选择对象</b>: <b>找到</b> 1 <b>个&#xFF0C;删除</b> 1 <b>个&#xFF0C;总计</b> 46 <b>个</b></div>
        <div class="ln"><b>选择对象</b>:</div>
      </div>
      <div class="cscroll">
        <svg class="arrow" width="19" height="20" viewBox="0 0 19 20"><path d="M5 12l4.500-5 4.500 5"/></svg>
        <span class="cthumb"></span>
        <svg class="arrow" width="19" height="20" viewBox="0 0 19 20"><path d="M5 8l4.500 5 4.500-5"/></svg>
      </div>
    </div>
    <div class="cmdinput">
      <div class="chscroll">
        <svg class="arrow" width="14" height="14" viewBox="0 0 14 14"><path d="M9 3L5 7l4 4"/></svg>
        <span class="chthumb"></span>
        <svg class="arrow" width="14" height="14" viewBox="0 0 14 14"><path d="M5 3l4 4-4 4"/></svg>
      </div>
    </div>
  </div>
</section>

<footer class="status">
  <span class="coords">1201.0852, -4529.7225, 0.0000</span>
  <span class="s"><svg class="ic18"><use href="#s-snap"/></svg></span><span class="s"><svg class="ic18"><use href="#s-grid"/></svg></span><span class="s on"><svg class="ic18"><use href="#s-ortho"/></svg></span><span class="s"><svg class="ic18"><use href="#s-polar"/></svg></span><span class="s on"><svg class="ic18"><use href="#s-osnap"/></svg></span><span class="s on"><svg class="ic18"><use href="#s-otrack"/></svg></span><span class="s"><svg class="ic18"><use href="#s-ducs"/></svg></span><span class="s"><svg class="ic18"><use href="#s-dyn"/></svg></span><span class="s"><svg class="ic18"><use href="#s-lw"/></svg></span><span class="s"><svg class="ic18"><use href="#s-qp"/></svg></span>
  <span class="s blank36"></span>
  <span class="s model">模型</span>
  <span class="s"><svg class="ic18"><use href="#s-model"/></svg></span><span class="s"><svg class="ic18"><use href="#s-layouts"/></svg></span><span class="s"></span>
  <span class="s"><svg class="ic18"><use href="#pan"/></svg></span><span class="s"><svg class="ic18"><use href="#zoom"/></svg></span><span class="s"><svg class="ic18"><use href="#s-wheel"/></svg></span><span class="s"><svg class="ic18"><use href="#s-motion"/></svg></span><span class="s"></span>
  <span class="s scale"><svg class="ic18"><use href="#s-anno"/></svg><span>1:1</span><i class="caret"></i></span>
  <span class="s"><svg class="ic18"><use href="#s-annob"/></svg></span><span class="s"><svg class="ic18"><use href="#s-annoc"/></svg></span>
  <span class="s narrow"></span>
  <span class="s ws"><svg class="ic18"><use href="#gear"/></svg><span>AutoCAD 经典</span><i class="caret"></i></span>
  <span class="s"><svg class="ic18"><use href="#s-lock"/></svg></span>
  <span class="s tray"><svg class="ic18"><use href="#s-tray"/></svg></span>
  <span class="s nar"><i class="caret"></i></span>
  <span class="s"><svg class="ic18"><use href="#s-win"/></svg></span>
  <span class="s grip"><svg width="14" height="14" viewBox="0 0 14 14"><path fill="#ddd" d="M11 2h2v2h-2zM8 5h2v2H8zM11 5h2v2h-2zM5 8h2v2H5zM8 8h2v2H8zM11 8h2v2h-2zM2 11h2v2H2zM5 11h2v2H5zM8 11h2v2H8zM11 11h2v2h-2z"/></svg></span>
</footer>
</body>
</html>
```
FILE: styles.css
```css
* { box-sizing: border-box; }
html, body { margin: 0; }
body {
  width: 1102px; height: 693px; overflow: hidden;
  display: flex; flex-direction: column;
  background: #6b6b6b;
  font-family: "Noto Sans", "Noto Sans CJK SC", sans-serif;
  position: relative;
}
.defs { position: absolute; }
symbol, svg use { stroke: #2b2b2b; fill: none; stroke-width: 1; }
.gt { font: bold 14px "Liberation Sans", sans-serif; text-anchor: middle; fill: #222; stroke: none; }
.ga { font: 17px "Liberation Serif", serif; fill: #222; stroke: none; }

.topline { height: 1px; flex: none; background: linear-gradient(90deg, #a9a9a9 911px, #2b5b5b 911px); }
.titlebar { height: 38px; flex: none; background: #fff; display: flex; align-items: center; }
.logo {
  position: absolute; left: 0; top: 9px; width: 41px; height: 41px;
  background: linear-gradient(135deg, #dcdcdc, #6e6e6e);
  border: 1px solid #333; z-index: 2;
}
.logo svg { position: absolute; left: -1px; top: 0; }
.logo-caret { position: absolute; right: 4px; top: 18px; border: 4px solid transparent; border-top: 5px solid #222; border-bottom: 0; }
.title-text { margin-left: 368px; font-size: 15.700px; color: #111; white-space: nowrap; margin-top: 2px; }
.t-doc { margin-left: 26px; }
.winctl { margin-left: auto; display: flex; }
.wc { width: 58.500px; height: 14px; margin-top: -4px; }
.wc path { fill: none; stroke: #888; stroke-width: 1; }

.menubar {
  height: 26px; flex: none; display: flex; align-items: center; padding-left: 56px;
  background: linear-gradient(#3f3f3f, #5a5a5a 8%, #7a7a7a 55%, #5d5d5d);
  color: #f2f2f2; font-size: 15px; position: relative;
}
.mi { white-space: nowrap; display: block; }
.w1 { width: 76px; } .w2 { width: 74px; } .w3 { width: 77px; } .w4 { width: 71px; } .w5 { width: 79px; } .w6 { width: 76px; }
.w7 { width: 79px; } .w8 { width: 78px; } .w9 { width: 82px; } .w10 { width: 76px; } .w11 { width: 82px; } .w12 { width: 60px; }
.mdi { margin-left: auto; margin-right: 4px; height: 14px; display: flex; }

.tbrow { flex: none; display: flex; align-items: flex-start; background: #6d6d6d; }
.r1 { height: 27px; }
.r2 { height: 29px; background: linear-gradient(#6d6d6d 23px, #8c8c8c 23px, #8c8c8c 25px, #5a5a5a 25px); }
.handle {
  flex: none; width: 5px; height: 23px; margin: 0 2px;
  background-image: radial-gradient(circle at 1px 1px, #1e1e1e 1px, transparent 1px);
  background-size: 2px 2px;
}
.gap1 { margin: 0 2px 0 3.500px; }
.gap2 { margin: 0 2px 0 4px; }
.gap3 { margin: 0 3px 0 2px; }
.tb { display: flex; align-items: center; height: 23px; background: #eeeeee; flex: none; }
.r1 > .tb:last-child { flex: 1; }
.r2 > .tb:last-child { flex: 1; }
.b { flex: none; width: 23px; height: 23px; display: flex; align-items: center; justify-content: center; }
.ic { width: 20px; height: 20px; display: block; flex: none; }
.ic16 { width: 16px; height: 16px; flex: none; display: block; }
.ic18 { width: 18px; height: 18px; flex: none; display: block; }
.sep { flex: none; width: 6px; height: 21px; background: linear-gradient(#777, #777) center / 1px 100% no-repeat; }
.dsep { flex: none; width: 7px; height: 23px; background: linear-gradient(90deg, #6d6d6d 2px, #e8e8e8 2px, #e8e8e8 3px, #888 3px, #888 4px, #e8e8e8 4px, #e8e8e8 5px, #6d6d6d 5px); }
.dd { flex: none; width: 12px; height: 23px; position: relative; }
.dd::after { content: ""; position: absolute; left: 2px; top: 9px; border: 4px solid transparent; border-top: 4px solid #333; border-bottom: 0; }
.dd.off::after { border-top-color: #aaa; }
.combo {
  flex: none; height: 23px; background: #dfdfdf; display: flex; align-items: center;
  border-bottom: 2px solid #bdbdbd; border-right: 1px solid #bdbdbd; padding-top: 2px;
  color: #111; font-size: 14px; white-space: nowrap; font-family: "DejaVu Sans", "Noto Sans CJK SC", sans-serif;
}
.combo.mono { font-family: "Liberation Mono", "Noto Sans CJK SC", monospace; }
.chev { width: 12px; height: 8px; margin-left: auto; margin-right: 4px; flex: none; }
.c-std { width: 118px; padding-left: 21px; }
.c-iso { width: 119px; padding-left: 20px; }
.c-tbl { flex: 1; padding-left: 8px; border-right: 0; }
.c-ws { width: 174px; padding-left: 9px; letter-spacing: .6px; }
.c-layer { width: 298px; padding-left: 1px; }
.c-layer .ic16 { margin-right: 1px; }
.c-layer .ic16:nth-child(1) { margin-left: 1px; }
.lname { margin-left: 4px; }
.c-color { width: 149px; padding-left: 6px; }
.c-color .swatch { margin-right: 5px; }
.c-ltype { width: 159px; padding-left: 5px; font-size: 13.700px; }
.c-lw { width: 125px; padding-left: 5px; font-size: 13.700px; }
.lt { display: block; height: 1px; background: #222; flex: none; }
.lt1 { width: 60px; margin-right: 5px; }
.lt2 { width: 36px; margin-right: 5px; }
.swatch { display: block; width: 11px; height: 11px; border: 1px solid #222; flex: none; }
.yellow { background: #ffff00; }
.white { background: #fff; margin-left: 2px; }
.rest { flex: 1; height: 23px; background: #b5b5b5; }

.main { display: flex; height: 386px; flex: none; align-items: flex-start; background: #6b6b6b; }
.vtb { flex: none; width: 25px; }
.vhandle {
  display: block; height: 7px; background-color: #4f4f4f;
  background-image: radial-gradient(circle at 1px 1px, #ddd .7px, transparent .8px);
  background-size: 2px 2px; background-position: 5px 1px;
}
.vbody {
  background: #ececec; display: flex; flex-direction: column; align-items: center;
  padding-top: 3px; gap: 1.700px;
}
.vtb.left { width: 24px; height: 386px; overflow: hidden; border-left: 1px solid #ddd; }
.vtb.left .vbody { height: 379px; }
.doc { flex: none; width: 1012px; margin-left: 6px; border-right: 2px solid #fff; height: 386px; display: flex; flex-direction: column; background: #fff; }
.docrow { display: flex; height: 367px; flex: none; }
.canvas { display: block; background: #000; flex: none; }
.cad { fill: none; stroke: #f4f4f4; stroke-width: 1; shape-rendering: crispEdges; }
.ucs { font: 12px "Liberation Sans", sans-serif; fill: #e8e8e8; text-anchor: middle; }
.vscroll { flex: 1; background: #f0f0f0; display: flex; flex-direction: column; justify-content: space-between; align-items: center; position: relative; }
.arrow { display: block; flex: none; }
.arrow path { fill: none; stroke: #606060; stroke-width: 2; }
.vthumb { position: absolute; left: 1px; right: 1px; top: 288px; height: 21px; background: #cdcdcd; }
.tabrow { height: 19px; flex: none; display: flex; background: #f0f0f0; border-top: 1px solid #b0b0b0; border-bottom: 1px solid #fff; font-size: 14px; align-items: stretch; }
.navbtns { display: flex; padding-left: 1px; flex: none; width: 75px; background: #e4e4e4; }
.nb { width: 18px; display: flex; align-items: center; justify-content: center; border-right: 1px solid #aaa; }
.nb svg { display: block; }
.nb path { fill: #666; stroke: #666; }
.tab { width: 57px; flex: none; text-align: center; line-height: 17px; color: #222; position: relative; }
.tab::after { content: ""; position: absolute; right: 0; top: 0; bottom: 0; width: 1px; background: #555; transform: skewX(-16deg); }
.tab.active { width: 53px; background: #000; color: #fff; clip-path: polygon(0 0, 100% 0, 92% 100%, 8% 100%); }
.t2 { width: 58px; }
.hscroll { margin-left: 412px; flex: 1; display: flex; justify-content: space-between; align-items: center; padding: 0 24px 0 4px; position: relative; border-left: 5px solid #d8d8d8; }
.hthumb { position: absolute; left: 112px; width: 21px; top: 0; bottom: 0; background: #cdcdcd; }

.order { margin-left: 4px; }
.order .vbody { padding-bottom: 1px; border: 1px solid #444; border-top: 0; }
.modify { margin-left: 3px; }
.modify .vbody { border: 1px solid #444; border-top: 0; padding-bottom: 2px; }

.cmd { flex: none; height: 166px; display: flex; background: #777; padding-top: 6px; }
.cmdhandle { width: 16px; flex: none; background: #ababab; position: relative; }
.cmddots { display: block; height: 5px; margin: 2px 2px 0; background-image: radial-gradient(circle at 1px 1px, #fff .7px, transparent .8px); background-size: 2px 2px; }
.cmdmain { flex: 1; display: flex; flex-direction: column; background: #fff; }
.cmdtop { height: 136px; flex: none; display: flex; border-bottom: 1px solid #aaa; }
.history {
  flex: 1; padding-left: 1px; margin-top: -2px; height: 122px;
  font: 16.700px/20px "Liberation Mono", "Noto Sans CJK SC", monospace;
  color: #111;
}
.ln { height: 20px; white-space: pre; }
.ln b { font: 16px/20px "Noto Sans CJK SC", sans-serif; letter-spacing: 4px; }
.cscroll { flex: none; width: 19px; background: #f0f0f0; display: flex; flex-direction: column; justify-content: space-between; position: relative; }
.cthumb { position: absolute; left: 1px; right: 1px; top: 92px; height: 23px; background: #cdcdcd; }
.cmdinput { flex: 1; display: flex; justify-content: flex-end; padding-top: 1px; }
.chscroll { width: 85px; height: 21px; margin-right: 17px; background: #f0f0f0; display: flex; align-items: center; justify-content: space-between; padding: 0 5px; position: relative; }
.chthumb { position: absolute; left: 22px; width: 21px; top: 0; bottom: 0; background: #cdcdcd; }

.status {
  flex: none; height: 20px; display: flex; align-items: stretch;
  background: linear-gradient(#adadad, #767676); border-top: 1px solid #222;
  color: #111; overflow: hidden;
}
.coords { width: 282px; flex: none; padding-left: 11px; font: 13.400px/19px "Liberation Mono", monospace; color: #151515; white-space: pre; }
.s { flex: none; width: 22px; display: flex; align-items: center; justify-content: center; border-left: 1px solid #dadada; border-right: 1px solid #666; background: linear-gradient(#c6c6c6, #8e8e8e); }
.s.on { background: linear-gradient(#74b4cc, #d2e8ee); }
.blank36 { width: 36px; background: none; }
.model { width: 36px; font: 16px/19px "Noto Sans CJK SC", sans-serif; }
.scale { width: 60px; font: 15px/19px "Liberation Mono", monospace; justify-content: flex-start; padding-left: 2px; gap: 2px; }
.narrow { width: 6px; background: #5a5a5a; }
.ws { width: 130px; font: 14px/19px "Liberation Mono", "Noto Sans CJK SC", monospace; justify-content: flex-start; padding-left: 2px; gap: 1px; white-space: pre; }
.caret { display: block; flex: none; border: 4px solid transparent; border-top: 5px solid #111; border-bottom: 0; margin-bottom: 6px; }
.tray { width: 43px; background: #555; padding: 0; }
.nar { width: 4px; border: 0; overflow: visible; }
.grip { flex: 1; background: #6d6d6d; border: 0; justify-content: flex-end; align-items: flex-end; }
```
